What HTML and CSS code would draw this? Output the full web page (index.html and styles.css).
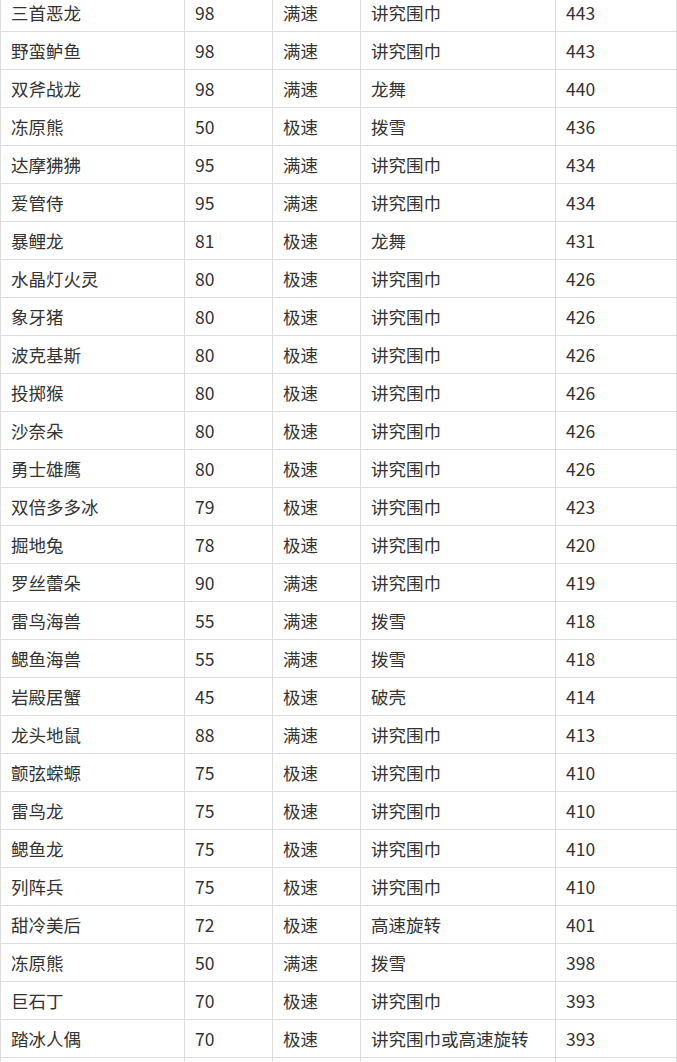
FILE: index.html
```html
<!DOCTYPE html>
<html lang="zh-CN">
<head>
<meta charset="utf-8">
<link rel="stylesheet" href="styles.css">
</head>
<body>
<table class="tbl">
<colgroup>
<col class="c1"><col class="c2"><col class="c3"><col class="c4"><col class="c5">
</colgroup>
<tbody>
<tr><td>三首恶龙</td><td>98</td><td>满速</td><td>讲究围巾</td><td>443</td></tr>
<tr><td>野蛮鲈鱼</td><td>98</td><td>满速</td><td>讲究围巾</td><td>443</td></tr>
<tr><td>双斧战龙</td><td>98</td><td>满速</td><td>龙舞</td><td>440</td></tr>
<tr><td>冻原熊</td><td>50</td><td>极速</td><td>拨雪</td><td>436</td></tr>
<tr><td>达摩狒狒</td><td>95</td><td>满速</td><td>讲究围巾</td><td>434</td></tr>
<tr><td>爱管侍</td><td>95</td><td>满速</td><td>讲究围巾</td><td>434</td></tr>
<tr><td>暴鲤龙</td><td>81</td><td>极速</td><td>龙舞</td><td>431</td></tr>
<tr><td>水晶灯火灵</td><td>80</td><td>极速</td><td>讲究围巾</td><td>426</td></tr>
<tr><td>象牙猪</td><td>80</td><td>极速</td><td>讲究围巾</td><td>426</td></tr>
<tr><td>波克基斯</td><td>80</td><td>极速</td><td>讲究围巾</td><td>426</td></tr>
<tr><td>投掷猴</td><td>80</td><td>极速</td><td>讲究围巾</td><td>426</td></tr>
<tr><td>沙奈朵</td><td>80</td><td>极速</td><td>讲究围巾</td><td>426</td></tr>
<tr><td>勇士雄鹰</td><td>80</td><td>极速</td><td>讲究围巾</td><td>426</td></tr>
<tr><td>双倍多多冰</td><td>79</td><td>极速</td><td>讲究围巾</td><td>423</td></tr>
<tr><td>掘地兔</td><td>78</td><td>极速</td><td>讲究围巾</td><td>420</td></tr>
<tr><td>罗丝蕾朵</td><td>90</td><td>满速</td><td>讲究围巾</td><td>419</td></tr>
<tr><td>雷鸟海兽</td><td>55</td><td>满速</td><td>拨雪</td><td>418</td></tr>
<tr><td>鳃鱼海兽</td><td>55</td><td>满速</td><td>拨雪</td><td>418</td></tr>
<tr><td>岩殿居蟹</td><td>45</td><td>极速</td><td>破壳</td><td>414</td></tr>
<tr><td>龙头地鼠</td><td>88</td><td>满速</td><td>讲究围巾</td><td>413</td></tr>
<tr><td>颤弦蝾螈</td><td>75</td><td>极速</td><td>讲究围巾</td><td>410</td></tr>
<tr><td>雷鸟龙</td><td>75</td><td>极速</td><td>讲究围巾</td><td>410</td></tr>
<tr><td>鳃鱼龙</td><td>75</td><td>极速</td><td>讲究围巾</td><td>410</td></tr>
<tr><td>列阵兵</td><td>75</td><td>极速</td><td>讲究围巾</td><td>410</td></tr>
<tr><td>甜冷美后</td><td>72</td><td>极速</td><td>高速旋转</td><td>401</td></tr>
<tr><td>冻原熊</td><td>50</td><td>满速</td><td>拨雪</td><td>398</td></tr>
<tr><td>巨石丁</td><td>70</td><td>极速</td><td>讲究围巾</td><td>393</td></tr>
<tr><td>踏冰人偶</td><td>70</td><td>极速</td><td>讲究围巾或高速旋转</td><td>393</td></tr>
<tr><td>&nbsp;</td><td>&nbsp;</td><td>&nbsp;</td><td>&nbsp;</td><td>&nbsp;</td></tr>
</tbody>
</table>
</body>
</html>
```
FILE: styles.css
```css
html, body {
  margin: 0;
  padding: 0;
  background: #fff;
}
body {
  font-family: "Noto Sans CJK SC", "Microsoft YaHei", sans-serif;
  font-size: 17.5px;
  color: #333;
  overflow: hidden;
}
.tbl {
  border-collapse: collapse;
  table-layout: fixed;
  width: 676px;
  margin-top: -7px;
}
.c1 { width: 184px; }
.c2 { width: 88px; }
.c3 { width: 88px; }
.c4 { width: 195px; }
.c5 { width: 121px; }
.tbl td {
  border: 1px solid #ddd;
  height: 38px;
  padding: 0 10px;
  line-height: 20px;
  vertical-align: middle;
  white-space: nowrap;
  box-sizing: border-box;
}
```
